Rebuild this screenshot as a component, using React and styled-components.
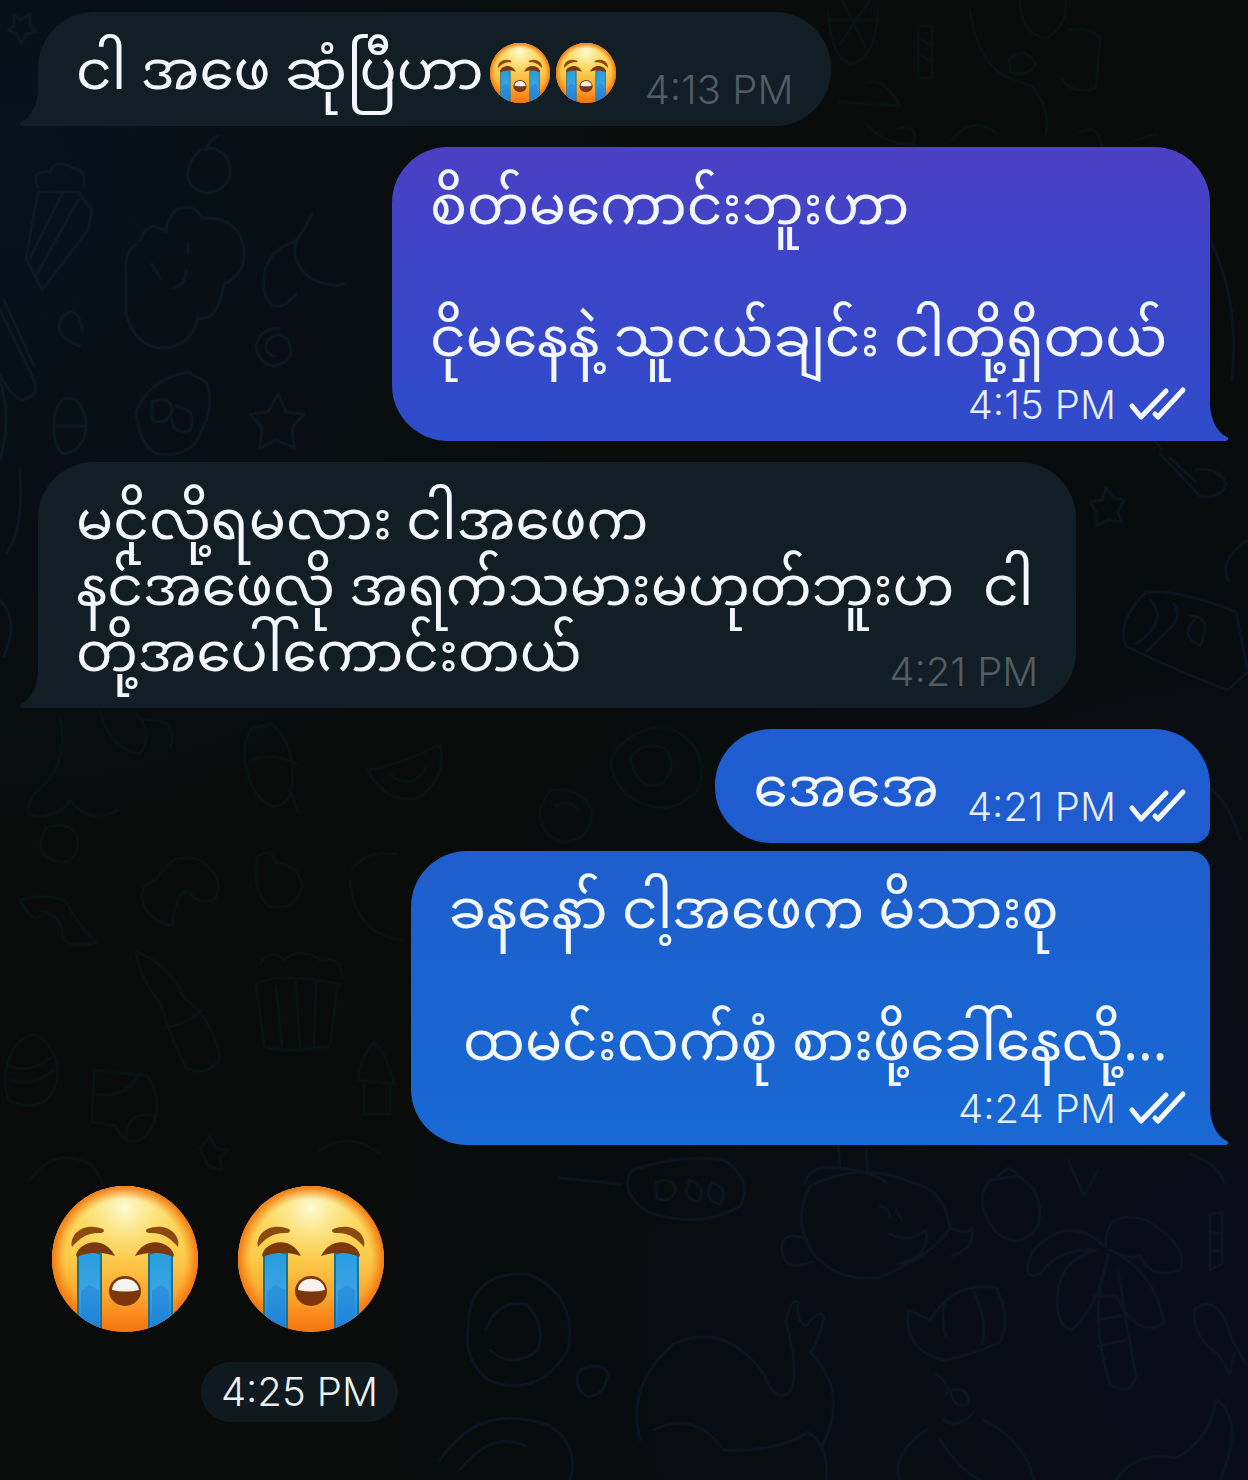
import React from 'react';
import styled, { createGlobalStyle } from 'styled-components';

const GlobalStyle = createGlobalStyle`
	* {
		box-sizing: border-box;
	}
	body {
		margin: 0;
		background: #090c0c;
	}
`;

const Page = styled.main`
	position: relative;
	min-height: 100vh;
	overflow: hidden;
	background: radial-gradient(ellipse at 0% 12%, #07111b 0%, rgba(7, 17, 27, 0) 36%),
		radial-gradient(ellipse at 100% 90%, #0a0d19 0%, rgba(10, 13, 25, 0) 50%), #090c0b;
	font-family: 'Noto Sans Myanmar', 'Noto Sans', 'Padauk', 'Myanmar Text', sans-serif;
	color: #f1f7fa;
`;
const Wallpaper = styled.svg`
	position: absolute;
	top: 0;
	left: 0;
	width: 100%;
	height: 100%;
	fill: none;
	stroke-width: 3;
	stroke-linecap: round;
	stroke-linejoin: round;
`;
const Chat = styled.div`
	position: relative;
	display: flex;
	flex-direction: column;
	gap: 21px;
	padding: 12px 38px 58px;
`;
const Group = styled.div`
	display: flex;
	flex-direction: column;
	align-items: flex-end;
	gap: 8px;
`;
const Bubble = styled.article`
	position: relative;
	align-self: ${({ $out }) => ($out ? 'flex-end' : 'flex-start')};
	width: ${({ $width }) => $width};
	padding: 31px 38px 12px;
	border-radius: ${({ $radius }) => $radius};
	background: ${({ $fill }) => $fill};
`;
const Line = styled.p`
	margin: 0;
	height: 66px;
	font-size: 55px;
	line-height: 66px;
	white-space: pre;
`;
const LastRow = styled.div`
	display: flex;
	align-items: flex-end;
	justify-content: space-between;
	height: 71px;
	margin-right: ${({ $out }) => ($out ? '-16px' : '0')};

	${Line} {
		align-self: flex-start;
	}
`;
const MetaRow = styled.div`
	display: flex;
	justify-content: flex-end;
	margin-top: 5px;
	margin-right: -16px;
`;
const Meta = styled.div`
	display: flex;
	align-items: center;
	gap: 12px;
	height: 48px;
	color: ${({ $out }) => ($out ? '#e6eeff' : '#525c63')};
`;
const Time = styled.time`
	font-family: Inter, Roboto, sans-serif;
	font-size: 40px;
	font-weight: 300;
	line-height: 48px;
	white-space: nowrap;
`;
const Check = styled.svg`
	width: 60px;
	height: 38px;
	fill: none;
	stroke: #f3f8ff;
	stroke-width: 5;
	stroke-linecap: round;
	stroke-linejoin: round;
`;
const Tail = styled.svg`
	position: absolute;
	bottom: 0;
	${({ $out }) => ($out ? 'left: calc(100% - 1px);' : 'right: calc(100% - 1px); transform: scaleX(-1);')}
	width: 20px;
	height: 36px;
	fill: ${({ $color }) => $color};
`;
const Face = styled.svg`
	flex: none;
	width: ${({ $size }) => $size};
	height: ${({ $size }) => $size};
	margin: ${({ $inline }) => ($inline ? '0 0 0 6px' : '0')};
	vertical-align: ${({ $inline }) => ($inline ? '-14px' : 'top')};
`;
const Sticker = styled.article`
	display: flex;
	flex-direction: column;
	align-items: flex-end;
	align-self: flex-start;
	gap: 30px;
	margin-top: 20px;
`;
const Faces = styled.div`
	display: flex;
	gap: 40px;
	padding: 0 14px;
`;
const Pill = styled.div`
	display: flex;
	align-items: center;
	height: 60px;
	padding: 0 20px;
	border-radius: 30px;
	background: #10191e;
	color: #edf1f3;
`;

const DARK = '#111e25';

const DOODLES_LEFT = [
	'M14 14l6 6 10-6 0 12 6 6-10 2-4 10-6-10-8-4 6-4z',
	'M38 188q-8-18 12-16q6-14 22-4q16 2 12 18M38 192l-12 66 16 32 46-60 4-20-14-18zM62 194l-32 64M78 200l-42 76',
	'M200 150q-18 18-10 34q12 14 28 6q20-12 8-34q-10-8-16-8M206 150q4-12 12-14',
	'M136 244q-12 8-10 30l0 40q10 34 36 34q28 0 36-30q20 4 26-34q22-10 20-34q-4-34-42-32q-8-16-26-8q-10 10-10 22q-18-14-26 8',
	'M152 264l8 14M186 270q0 14-12 18M188 244l0 10',
	'M312 214q-12 24-18 28q-34 10-30 50q6 20 22 12l10-10M300 234q-14 24 10 44q20 10 34 6',
	'M82 330q-2-18-12-18q-14 6-10 20q10 12 20 14',
	'M280 328q-20 0-24 18q2 18 18 20q24-6 14-26q-10-10-20 0q-6 12 6 16',
	'M0 310l34 70q6 16-12 20q-14-6-22-26M4 300l30 66',
	'M188 372q-40 8-52 40q4 36 22 42q32 4 42-20q16-30 6-52zM152 402q20-8 20 10q-6 14-20 8zM176 406q22 4 14 24q-16 6-18-10',
	'M278 394l8 18 18 2-12 14 2 20-18-8-16 8 2-20-12-14 18-2z',
	'M56 410q6-16 20-10q14 14 8 38q-8 16-22 16q-12-14-6-44zM54 426l30 0',
	'M0 380q12 40 0 80M20 470q4 60-14 84M0 600q20 20 4 56',
];
const DOODLES_TEAL = [
	'M828 10q2 46 22 54q26-4 28-54M830 20l44 0M842 0l24 48M870 0l-30 44',
	'M918 26l14 0 0 52-14 0zM918 38l14 8M918 54l14 8',
	'M970 10q6 48 34 66l28 10q18 22 14 48M1020 0q0 34 26 38q22-12 20-38M1010 58q16-12 26 6q-8 14-26 8zM1070 30q20-4 30 8l-4 50q-24 8-34-10',
	'M840 102l60 4q-14-26-30-24M866 124q20 22 48 20q4-20-14-16',
	'M952 140q20-26 46-6M1080 132q20-10 22 18M1136 140l20-6',
	'M60 716q10 50-24 76q-20 26 8 24q20-4 26-16q20 26 48 10M100 710q10 40 40 44q14-20-4-42M140 720q40-4 30 28',
	'M252 728q-14 20-2 54q20 40 40 14q10-46-18-72zM252 760q22-8 44 4M290 790l8 22',
	'M368 770q36-6 72-26q8 34-22 54q-34 6-50-28zM390 774q20 18 36-6',
	'M612 758q20-34 58-30q42 20 28 62q-30 32-70 6q-20-20-16-38zM630 758q14-18 34-10q16 18-2 36q-24 8-32-26',
	'M550 790q30-4 42 20q0 30-28 32q-26-6-24-34zM556 806q14-8 24 6',
	'M46 828q20-8 30 6q6 20-10 28q-24 0-26-18z',
	'M20 900q28-8 46 2q14 26 30 40q-22 8-34-4q2-20-18-26q-10 16-24-12z',
	'M156 880q16-30 44-20q28 20 14 40q-20 4-24-8q-14-4-18 34q-20-4-28-20q-8-20 12-26z',
	'M258 856q12-8 18 6q24 4 26 24q-6 26-34 20q-18-20-10-50z',
	'M352 870q12-20 44-16M350 880q4 54 52 60',
	'M136 952q34 12 48 46q30 22 36 60q-12 20-34 10q-16-32-26-66q-20-22-24-50M166 1028q20-4 36-18',
	'M256 984q20-12 84 0M256 984l8 62q20 8 66 0l8-62M276 986l6 60M296 982l4 64M316 982l-2 64M260 964q10-16 24-4q16-14 36 0q22-4 22 18',
	'M14 1048q20-26 36 0q14 20 2 46q-16 20-44 6q-8-28 6-52zM10 1080q22 8 44-10M10 1066q20 8 40-8',
	'M94 1070l54 6q20 34-4 62q-20 10-28-12l-24-4zM96 1094q30 6 44-22M126 1140q0-30 28-24',
	'M358 1080q2-24 16-38q14 14 20 42zM364 1084l0 30 26 0 0-30',
	'M210 1136l6 12 12 2-8 8 2 12-14-4-8-18z',
	'M30 1180q24-34 60-16q20 20 12 46M320 1150q30-20 60 4',
];
const DOODLES_BLUE = [
	'M1106 488l8 10 10 2-6 12 4 10-14-2-12 6 0-14-6-10 12-2z',
	'M1160 454l40 42q20 4 26-12q-8-18-30-14M1170 458l26 24',
	'M1146 592q36-2 90 20l12 60-20 18q-50-18-102-44q-10-24 20-54zM1150 600q20 20-14 44M1174 604q10 14-8 28l-20 20M1190 616q24 0 10 30q-20-10-6-26',
	'M1248 540q-30 20-20 40M1210 240q30 60 22 140',
	'M1094 390l10 10M1102 430q40-10 60 20M1200 780q30 20 40 60',
	'M560 1178l60 6M632 1170q50-16 92-10q30 20 16 46q-40 24-92 6q-30-20-16-42zM656 1182q16-6 20 8q-6 14-20 8zM690 1180q18 8 8 22q-18-4-8-22M712 1182q18 8 8 22q-18-4-8-22',
	'M810 1186q-18 34 2 66q24 30 66 26q54-22 72-50q-6-40-40-46q-48-22-100 4zM804 1184q8-20 28-16q34 0 54 14M838 1142l2 26M866 1150l2 24M808 1240q-28-12-26 12q4 20 30 10M950 1228q18 8 22 0q4 20-20 28M880 1206q10 2 10 12M896 1210l6 10M890 1234q18 10 36-4q4 28-28 34',
	'M990 1180q-18 22 6 52q24 20 42-6q8-34-20-50zM998 1176l10-8 10 6',
	'M1104 1246q-36-34-72 6q-12 30 8 22q18-26 56-24q-34 10-38 40q-4 36 14 40q28-26 36-76M1106 1246q-2-38 40-26q44 26 34 50q-30 10-40-14q-10 4-30-6q44 20 54 72q-24 20-48-26M1104 1270q-14 50 6 114q20 14 26-8q-10-52-18-106M1094 1296l22 0M1096 1320l24-4M1098 1346l28-6',
	'M1210 1214l12-2 0 52-12 6zM1210 1232l12 2M1210 1250l12 2',
	'M1194 1310q24-20 38 30l14 24M1194 1310q0 30 24 44l12 20 4-20',
	'M908 1310l22 10q24-40 66-32q16 30 4 54q-30 14-56 18q-40-8-36-50zM946 1300q-6 20 0 36M974 1292q14 30 8 52',
	'M640 1440q-14-56 34-96q50-24 90 30q10 30 26 18q10-20-4-70q4-24 12-20q-2 20 8 24q16-20 18-8q-8 30-14 34q40 40 12 94M654 1430q40-20 70 20q56 2 84-18q22 16 18 48',
	'M468 1330q0-60 60-56q50 20 40 76q-30 50-80 30q-24-20-20-50zM486 1330q10-30 40-26q20 20 12 46q-26 20-48 0',
	'M580 1370q20-10 28 4q-4 24-22 22q-14-10-6-26M440 1460q40-60 110-34q30 20 20 54M460 1470q30-40 66-24',
	'M936 1374q16 12 10 20M950 1390q20-4 18 14q-14 6-18-14zM944 1420q14 10 30-8M926 1430q-36 26-26 50M984 1420q40 20 50 60M940 1440q20 30 40 40',
	'M1216 1400q-6 40-40 58q-40-8-60 22M1216 1400q30 20 4 80M1068 1160l16 36 14-26M1190 1154q28 10 34 28',
];

const Doodles = () => (
	<Wallpaper viewBox="0 0 1248 1480" preserveAspectRatio="xMidYMin slice" aria-hidden="true">
		<g stroke="#0b1820">
			{DOODLES_LEFT.map((d) => (
				<path key={d} d={d} />
			))}
		</g>
		<g stroke="#0a1314">
			{DOODLES_TEAL.map((d) => (
				<path key={d} d={d} />
			))}
		</g>
		<g stroke="#0c141f">
			{DOODLES_BLUE.map((d) => (
				<path key={d} d={d} />
			))}
		</g>
	</Wallpaper>
);

const CryingFace = ({ size, inline }) => {
	const id = React.useId();
	return (
		<Face $size={size} $inline={inline} viewBox="0 0 146 146" role="img" aria-label="😭">
			<defs>
				<linearGradient id={`${id}skin`} x1="0" y1="0" x2="0" y2="1">
					<stop offset="0" stopColor="#fbe36c" />
					<stop offset="0.5" stopColor="#fbca4b" />
					<stop offset="0.75" stopColor="#fba72d" />
					<stop offset="1" stopColor="#f8700f" />
				</linearGradient>
				<radialGradient id={`${id}rim`}>
					<stop offset="0.82" stopColor="#f88a18" stopOpacity="0" />
					<stop offset="0.96" stopColor="#f57a12" stopOpacity="0.8" />
					<stop offset="1" stopColor="#f57a12" />
				</radialGradient>
				<radialGradient id={`${id}shine`} cx="0.5" cy="0.15" r="0.38">
					<stop offset="0" stopColor="#fdfbd8" />
					<stop offset="1" stopColor="#fde77b" stopOpacity="0" />
				</radialGradient>
				<linearGradient id={`${id}tear`} x1="0" y1="0" x2="0" y2="1">
					<stop offset="0" stopColor="#279ddd" />
					<stop offset="0.5" stopColor="#3ba3e4" />
					<stop offset="1" stopColor="#1a80d8" />
				</linearGradient>
				<clipPath id={`${id}clip`}>
					<circle cx="73" cy="73" r="73" />
				</clipPath>
			</defs>
			<circle cx="73" cy="73" r="73" fill={`url(#${id}skin)`} />
			<circle cx="73" cy="73" r="73" fill={`url(#${id}shine)`} />
			<circle cx="73" cy="73" r="73" fill={`url(#${id}rim)`} />
			<g clipPath={`url(#${id}clip)`}>
				<path
					d="M26 67q11-4 23 1v80H26zM97 68q12-5 23-1v80H97z"
					fill={`url(#${id}tear)`}
					stroke="#1c718c"
					strokeWidth="2"
				/>
				<path d="M29 105l8-6 10 5v38H29zM100 105l9-6 8 5v38h-17z" fill="#1c7fd6" opacity="0.5" />
			</g>
			<path d="M20 61c-3-12 11-26 31-18 2 2 1 4-4 4-13 0-20 6-27 14z" fill="#8a4a10" />
			<path d="M126 61c3-12-11-26-31-18-2 2-1 4 4 4 13 0 20 6 27 14z" fill="#8a4a10" />
			<path d="M24 69c3-13 28-21 39 1-11-4-25-5-38 1z" fill="#7a390b" />
			<path d="M122 69c-3-13-28-21-39 1 11-4 25-5 38 1z" fill="#7a390b" />
			<ellipse cx="73" cy="105" rx="16" ry="15" fill="#7b370b" />
			<path d="M60 104c1-15 25-15 27 0q-13 3-27 0z" fill="#f7f3ec" />
		</Face>
	);
};

const Stamp = ({ time, out }) => (
	<Meta $out={out}>
		<Time>{time}</Time>
		{out && (
			<Check viewBox="0 0 60 38" role="img" aria-label="Read">
				<path d="M4 20l9 11L38 5M27 28l3 3L55 4" />
			</Check>
		)}
	</Meta>
);

const Message = ({ lines, faces = 0, time, out, inline, tail, width, radius, fill }) => {
	const last = lines[lines.length - 1];
	const head = inline ? lines.slice(0, -1) : lines;
	return (
		<Bubble $out={out} $width={width} $radius={radius} $fill={fill}>
			{head.map((line, i) => (
				<Line key={i}>{line}</Line>
			))}
			{inline ? (
				<LastRow $out={out}>
					<Line>
						{last}
						{Array.from({ length: faces }, (_, i) => (
							<CryingFace key={i} size="60px" inline />
						))}
					</Line>
					<Stamp time={time} out={out} />
				</LastRow>
			) : (
				<MetaRow>
					<Stamp time={time} out={out} />
				</MetaRow>
			)}
			{tail && (
				<Tail $out={out} $color={tail} viewBox="0 0 20 36" aria-hidden="true">
					<path d="M0 0h1C2 14 7 27 18 32Q21 34 17 36H0z" />
				</Tail>
			)}
		</Bubble>
	);
};

const App = () => {
	return (
		<Page>
			<GlobalStyle />
			<Doodles />
			<Chat>
				<Message
					lines={['ငါ အဖေ ဆုံပြီဟာ']}
					faces={2}
					time="4:13 PM"
					inline
					tail={DARK}
					width="67.7%"
					radius="56px 56px 56px 0"
					fill={DARK}
				/>
				<Message
					out
					lines={['စိတ်မကောင်းဘူးဟာ', '', 'ငိုမနေနဲ့ သူငယ်ချင်း ငါတို့ရှိတယ်']}
					time="4:15 PM"
					tail="#2e4ccb"
					width="69.8%"
					radius="56px 56px 0 56px"
					fill="linear-gradient(#4b40c4, #3c45c8 45%, #2e4ccb)"
				/>
				<Message
					lines={['မငိုလို့ရမလား ငါအဖေက', 'နင်အဖေလို အရက်သမားမဟုတ်ဘူးဟ  ငါ', 'တို့အပေါ်ကောင်းတယ်']}
					time="4:21 PM"
					inline
					tail={DARK}
					width="88.6%"
					radius="56px 56px 56px 0"
					fill={DARK}
				/>
				<Group>
					<Message
						out
						lines={['အေအေ']}
						time="4:21 PM"
						inline
						width="42.2%"
						radius="56px 56px 16px 56px"
						fill="#1f5ccf"
					/>
					<Message
						out
						lines={['ခနနော် ငါ့အဖေက မိသားစု', '', ' ထမင်းလက်စုံ စားဖို့ခေါ်နေလို့...']}
						time="4:24 PM"
						tail="#1968d3"
						width="68.2%"
						radius="56px 20px 0 56px"
						fill="linear-gradient(#1f5ecc, #1a64d0 50%, #1968d3)"
					/>
				</Group>
				<Sticker>
					<Faces>
						<CryingFace size="146px" />
						<CryingFace size="146px" />
					</Faces>
					<Pill>
						<Time>4:25 PM</Time>
					</Pill>
				</Sticker>
			</Chat>
		</Page>
	);
};

export default App;
